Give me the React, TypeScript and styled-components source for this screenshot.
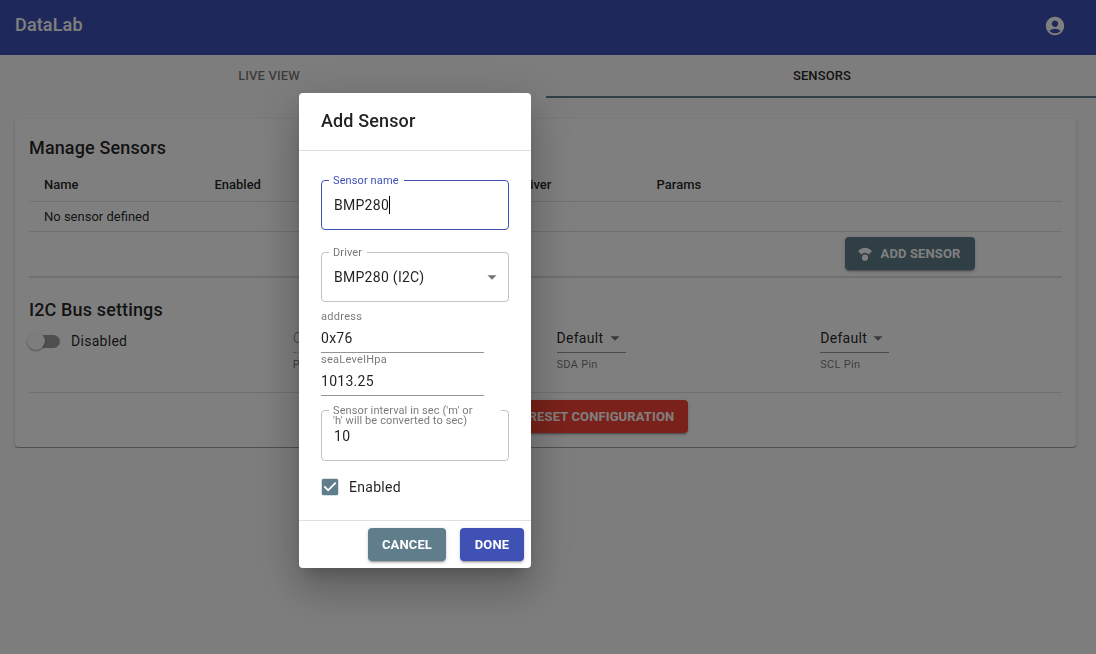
import React, { useState } from "react";
import styled, { createGlobalStyle, css } from "styled-components";
import { MdAccountCircle, MdArrowDropDown, MdCheckBox, MdCheckBoxOutlineBlank } from "react-icons/md";

const color = {
  primary: "#3f51b5",
  secondary: "#607d8b",
  danger: "#f44336",
  text: "rgba(0, 0, 0, 0.87)",
  muted: "rgba(0, 0, 0, 0.54)",
  line: "rgba(0, 0, 0, 0.12)",
};

const Global = createGlobalStyle`
  *, *::before, *::after { box-sizing: border-box; }
  body {
    margin: 0;
    background: #fafafa;
    color: ${color.text};
    font-family: Roboto, "Liberation Sans", sans-serif;
    font-size: 14px;
    line-height: 20px;
    letter-spacing: 0.02em;
  }
  button, input, select { font: inherit; letter-spacing: inherit; color: inherit; margin: 0; }
`;

const AppBar = styled.header`
  display: flex;
  align-items: center;
  justify-content: space-between;
  height: 55px;
  padding: 0 30px 4px 15px;
  background: ${color.primary};
  color: #fff;
`;

const Brand = styled.h1`
  margin: 0;
  padding-bottom: 2px;
  font-size: 18px;
  line-height: 28px;
  font-weight: 500;
  letter-spacing: 0.0075em;
`;

const IconButton = styled.button`
  display: flex;
  padding: 0;
  border: 0;
  background: none;
  font-size: 22px;
`;

const Tabs = styled.nav`
  display: grid;
  grid-template-columns: 546fr 550fr;
  height: 43px;
`;

const Tab = styled.button<{ $active?: boolean }>`
  padding: ${(p) => (p.$active ? "0 0 0 2px" : "0 8px 0 0")};
  border: 0;
  border-bottom: 2px solid ${(p) => (p.$active ? color.secondary : "transparent")};
  background: none;
  color: ${(p) => (p.$active ? color.text : color.muted)};
  font-size: 13px;
  font-weight: 500;
  letter-spacing: 0.01em;
`;

const Card = styled.main`
  margin: 21px 20px 0 15px;
  padding: 14px;
  border-bottom: 1px solid #a0a0a0;
  border-radius: 4px;
  background: #fff;
  box-shadow: 0 1px 3px rgba(0, 0, 0, 0.2);
`;

const Heading = styled.h2`
  margin: 0;
  font-size: 18px;
  line-height: 29px;
  font-weight: 500;
  letter-spacing: 0.0075em;
`;

const Divider = styled.hr`
  height: 1px;
  margin: 0;
  border: 0;
  background: ${color.line};
`;

const SensorTable = styled.table`
  width: 100%;
  margin: 5px 0 0;
  table-layout: fixed;
  border-collapse: separate;
  border-spacing: 0;
  font-size: 13px;
  line-height: 18px;
  letter-spacing: 0;
  th, td {
    padding: 0 15px;
    border-bottom: 1px solid ${color.line};
    text-align: left;
  }
  th { height: 35px; padding-top: 1px; font-weight: 500; }
  td { height: 30px; }
  tfoot td { height: 45px; padding-top: 5px; vertical-align: top; }
`;

const Col = styled.col<{ $share: number }>`
  width: ${(p) => p.$share}%;
`;

const Button = styled.button<{ $tone: "primary" | "secondary" | "danger"; $icon?: boolean }>`
  display: inline-flex;
  align-items: center;
  justify-content: center;
  gap: 8px;
  min-width: 64px;
  height: 33px;
  padding: 0 14px 0 ${(p) => (p.$icon ? "12px" : "14px")};
  border: 0;
  border-radius: 4px;
  background: ${(p) => color[p.$tone]};
  color: #fff;
  font-size: 13px;
  font-weight: 700;
  letter-spacing: 0.01em;
  white-space: nowrap;
  box-shadow: 0 3px 1px -2px rgba(0, 0, 0, 0.2), 0 2px 2px rgba(0, 0, 0, 0.14), 0 1px 5px rgba(0, 0, 0, 0.12);
`;

const Section = styled.section`
  padding-top: 17px;
`;

const BusGrid = styled.div`
  display: grid;
  grid-template-columns: repeat(4, 1fr);
  column-gap: 22px;
  align-items: start;
  padding: 2px 0 20px;
`;

const SwitchLabel = styled.label`
  display: flex;
  align-items: center;
  gap: 11px;
  height: 30px;
`;

const Switch = styled.input`
  appearance: none;
  position: relative;
  width: 31px;
  height: 13px;
  border-radius: 7px;
  background: rgba(0, 0, 0, 0.38);
  &::before {
    content: "";
    position: absolute;
    top: -3px;
    left: -2px;
    width: 18px;
    height: 18px;
    border-radius: 50%;
    background: #fafafa;
    box-shadow: 0 1px 2px rgba(0, 0, 0, 0.4);
  }
  &:checked { background: ${color.secondary}; }
  &:checked::before { left: 15px; }
`;

const PinField = styled.div`
  display: flex;
  flex-direction: column;
  align-items: flex-start;
  gap: 5px;
`;

const FieldLabel = styled.label`
  color: ${color.muted};
  font-size: 11px;
  line-height: 13px;
`;

const PinLabel = styled(FieldLabel)`
  line-height: 14px;
`;

const SelectWrap = styled.div<{ $outlined?: boolean }>`
  position: relative;
  width: ${(p) => (p.$outlined ? "100%" : "69px")};
  svg {
    position: absolute;
    right: ${(p) => (p.$outlined ? "6px" : "0")};
    top: ${(p) => (p.$outlined ? "14px" : "1px")};
    font-size: 22px;
    color: ${color.muted};
    pointer-events: none;
  }
`;

const PinSelect = styled.select`
  display: block;
  appearance: none;
  width: 100%;
  height: 27px;
  padding: 0 0 3px;
  border: 0;
  border-bottom: 1px solid rgba(0, 0, 0, 0.42);
  border-radius: 0;
  background: none;
  &:disabled { border-bottom-style: dotted; color: rgba(0, 0, 0, 0.38); opacity: 1; }
`;

const CardActions = styled.div`
  display: flex;
  justify-content: center;
  padding: 7px 0 0 90px;
`;

const Backdrop = styled.div`
  position: fixed;
  inset: 0;
  display: flex;
  align-items: center;
  justify-content: center;
  padding: 7px 266px 0 0;
  background: rgba(0, 0, 0, 0.5);
`;

const Dialog = styled.form`
  width: 232px;
  border-radius: 4px;
  background: #fff;
  box-shadow: 0 11px 15px -7px rgba(0, 0, 0, 0.2), 0 24px 38px 3px rgba(0, 0, 0, 0.14), 0 9px 46px 8px rgba(0, 0, 0, 0.12);
`;

const DialogTitle = styled(Heading)`
  padding: 13px 22px 15px;
`;

const DialogBody = styled.div`
  display: flex;
  flex-direction: column;
  padding: 29px 22px 22px;
  border: solid ${color.line};
  border-width: 1px 0;
`;

const Outlined = styled.div<{ $focused?: boolean; $gap: number }>`
  position: relative;
  margin-bottom: ${(p) => p.$gap}px;
  color: ${(p) => (p.$focused ? color.primary : color.muted)};
`;

const OutlinedLabel = styled.label<{ $wide?: boolean }>`
  position: absolute;
  z-index: 1;
  top: -4px;
  left: 8px;
  ${(p) => p.$wide && "right: 8px;"}
  padding: 0 ${(p) => (p.$wide ? "20px" : "5px")} 0 4px;
  background: #fff;
  font-size: 11px;
  line-height: 10px;
  letter-spacing: 0.01em;
`;

const outline = css<{ $focused?: boolean; $tall?: boolean }>`
  display: block;
  appearance: none;
  width: 100%;
  height: ${(p) => (p.$tall ? 51 : 50)}px;
  padding: 0 12px;
  border: 1px solid ${(p) => (p.$focused ? color.primary : "rgba(0, 0, 0, 0.23)")};
  border-radius: 4px;
  background: none;
  color: ${color.text};
  outline: 0;
`;

const OutlinedInput = styled.input`${outline}`;
const OutlinedSelect = styled.select`${outline}`;

const Caret = styled.span`
  position: absolute;
  left: 68px;
  top: 16px;
  width: 1px;
  height: 18px;
  background: #000;
`;

const LineField = styled.div`
  display: flex;
  flex-direction: column;
  width: 163px;
`;

const LineInput = styled.input`
  width: 100%;
  height: 30px;
  padding: 0;
  border: 0;
  border-bottom: 1px solid rgba(0, 0, 0, 0.42);
  background: none;
  outline: 0;
`;

const LineFields = styled.div`
  padding-bottom: 14px;
`;

const CheckLabel = styled.label`
  position: relative;
  display: flex;
  align-items: center;
  gap: 8px;
  height: 22px;
  margin-left: -2px;
  svg { font-size: 22px; color: ${color.secondary}; }
  input {
    position: absolute;
    width: 22px;
    height: 22px;
    opacity: 0;
  }
`;

const DialogActions = styled.div`
  display: flex;
  justify-content: flex-end;
  gap: 14px;
  padding: 7px;
`;

const SensorIcon = () => (
  <svg width="16" height="18" viewBox="0 0 16 18" aria-hidden="true">
    <path d="M1 6Q8-.6 15 6L11.8 9.6Q8 6 4.2 9.6Z" fill="currentColor" />
    <circle cx="8" cy="12.7" r="3.1" fill="currentColor" />
  </svg>
);

function PinChoice({ id, label, value, disabled }: { id: string; label: string; value: string; disabled?: boolean }) {
  return (
    <PinField>
      <SelectWrap>
        <PinSelect id={id} disabled={disabled}>
          <option>{value}</option>
        </PinSelect>
        <MdArrowDropDown />
      </SelectWrap>
      <PinLabel htmlFor={id}>{label}</PinLabel>
    </PinField>
  );
}

export default function App() {
  const [busOn, setBusOn] = useState(false);
  const [enabled, setEnabled] = useState(true);

  return (
    <>
      <Global />
      <AppBar>
        <Brand>DataLab</Brand>
        <IconButton aria-label="Account">
          <MdAccountCircle />
        </IconButton>
      </AppBar>
      <Tabs>
        <Tab>LIVE VIEW</Tab>
        <Tab $active>SENSORS</Tab>
      </Tabs>
      <Card>
        <Heading>Manage Sensors</Heading>
        <SensorTable>
          <colgroup>
            <Col $share={16.5} />
            <Col $share={29.3} />
            <Col $share={13.5} />
            <Col $share={18.2} />
            <col />
          </colgroup>
          <thead>
            <tr>
              <th>Name</th>
              <th>Enabled</th>
              <th>Driver</th>
              <th>Params</th>
              <th aria-label="Actions" />
            </tr>
          </thead>
          <tbody>
            <tr>
              <td colSpan={5}>No sensor defined</td>
            </tr>
          </tbody>
          <tfoot>
            <tr>
              <td colSpan={4} />
              <td>
                <Button $tone="secondary" $icon>
                  <SensorIcon />
                  ADD SENSOR
                </Button>
              </td>
            </tr>
          </tfoot>
        </SensorTable>
        <Divider />
        <Section>
          <Heading>I2C Bus settings</Heading>
          <BusGrid>
            <SwitchLabel>
              <Switch type="checkbox" role="switch" checked={busOn} onChange={(e) => setBusOn(e.target.checked)} />
              {busOn ? "Enabled" : "Disabled"}
            </SwitchLabel>
            <PinChoice id="preset" label="Preset" value="Custom" disabled />
            <PinChoice id="sda" label="SDA Pin" value="Default" />
            <PinChoice id="scl" label="SCL Pin" value="Default" />
          </BusGrid>
        </Section>
        <Divider />
        <CardActions>
          <Button $tone="danger" $icon>
            <SensorIcon />
            RESET CONFIGURATION
          </Button>
        </CardActions>
      </Card>

      <Backdrop>
        <Dialog role="dialog" aria-labelledby="dialog-title" onSubmit={(e) => e.preventDefault()}>
          <DialogTitle id="dialog-title">Add Sensor</DialogTitle>
          <DialogBody>
            <Outlined $focused $gap={22}>
              <OutlinedLabel htmlFor="name">Sensor name</OutlinedLabel>
              <OutlinedInput id="name" $focused defaultValue="BMP280" />
              <Caret />
            </Outlined>
            <Outlined $gap={8}>
              <OutlinedLabel htmlFor="driver">Driver</OutlinedLabel>
              <SelectWrap $outlined>
                <OutlinedSelect id="driver">
                  <option>BMP280 (I2C)</option>
                </OutlinedSelect>
                <MdArrowDropDown />
              </SelectWrap>
            </Outlined>
            <LineFields>
              <LineField>
                <FieldLabel htmlFor="address">address</FieldLabel>
                <LineInput id="address" defaultValue="0x76" />
              </LineField>
              <LineField>
                <FieldLabel htmlFor="sea">seaLevelHpa</FieldLabel>
                <LineInput id="sea" defaultValue="1013.25" />
              </LineField>
            </LineFields>
            <Outlined $gap={15}>
              <OutlinedLabel htmlFor="interval" $wide>
                Sensor interval in sec ('m' or 'h' will be converted to sec)
              </OutlinedLabel>
              <OutlinedInput id="interval" $tall defaultValue="10" />
            </Outlined>
            <CheckLabel>
              <input type="checkbox" checked={enabled} onChange={(e) => setEnabled(e.target.checked)} />
              {enabled ? <MdCheckBox /> : <MdCheckBoxOutlineBlank />}
              Enabled
            </CheckLabel>
          </DialogBody>
          <DialogActions>
            <Button type="button" $tone="secondary">CANCEL</Button>
            <Button type="submit" $tone="primary">DONE</Button>
          </DialogActions>
        </Dialog>
      </Backdrop>
    </>
  );
}
